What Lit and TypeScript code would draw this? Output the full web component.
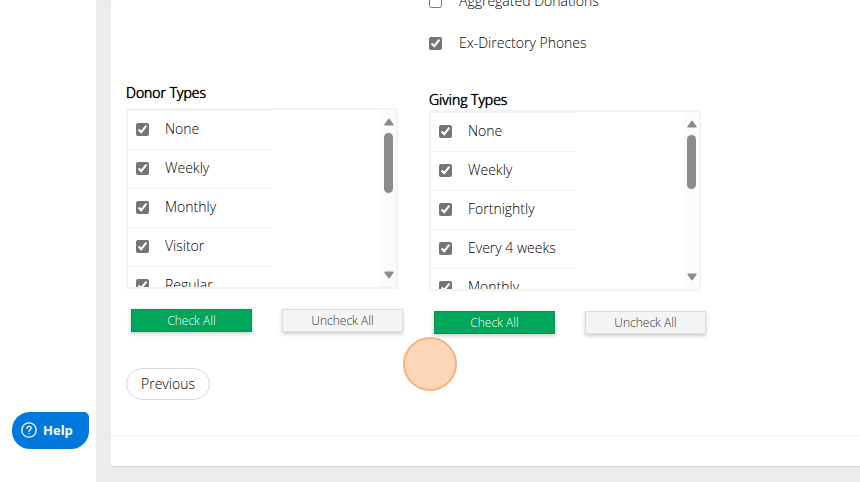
import { LitElement, html, css } from "lit";
import { customElement, property } from "lit/decorators.js";

@customElement("check-list")
class CheckList extends LitElement {
  @property() heading = "";
  @property({ attribute: false }) items: string[] = [];

  static styles = css`
    :host {
      display: block;
      width: 272px;
    }
    .heading {
      margin: 0;
      font-size: 14px;
      line-height: 20px;
      font-weight: 300;
      color: #000;
      text-shadow: 0 0 0 #000, 0 0 1px #000;
    }
    .box {
      display: flex;
      justify-content: space-between;
      height: 177px;
      margin-top: var(--list-gap, 5px);
      border: 2px solid #f3f3f3;
      overflow: hidden;
    }
    .rows {
      width: 145px;
      margin: 0;
      padding: 0;
      list-style: none;
    }
    .row {
      display: flex;
      align-items: center;
      gap: 16px;
      height: 36px;
      padding: 0 0 2px 8px;
      border-top: 1px solid #f3f3f3;
      font-size: 14px;
      line-height: 20px;
    }
    .tick {
      width: 13px;
      height: 13px;
      margin: 0;
      accent-color: #757575;
    }
    .track {
      display: flex;
      flex-direction: column;
      align-items: center;
      width: 15px;
      padding: 8px 0;
      box-sizing: border-box;
      background: #fbfbfb;
    }
    .arrow {
      width: 10px;
      height: 8px;
      fill: #8b8b8b;
    }
    .thumb {
      width: 9px;
      height: var(--thumb-size, 60px);
      margin: 7px 0 auto;
      border-radius: 5px;
      background: #8b8b8b;
    }
    .actions {
      display: flex;
      gap: 30px;
      margin: 20px 0 0 5px;
      width: 272px;
    }
    .btn {
      flex: 1;
      height: 23px;
      padding: 0;
      border: 1px solid #dcdcdc;
      background: #f4f4f4;
      color: #333;
      font: inherit;
      font-size: 12px;
      line-height: 20px;
      box-shadow: 0 2px 4px rgba(0, 0, 0, 0.2);
    }
    .primary {
      border-color: #089350;
      background: #00a65a;
      color: #fff;
    }
  `;

  render() {
    return html`
      <h2 class="heading">${this.heading}</h2>
      <div class="box">
        <ul class="rows">
          ${this.items.map(
            (item) => html`<li>
              <label class="row"><input class="tick" type="checkbox" checked />${item}</label>
            </li>`
          )}
        </ul>
        <div class="track" aria-hidden="true">
          <svg class="arrow" viewBox="0 0 10 8"><path d="M4.3 1Q5 .2 5.7 1L9.5 6.2Q10 7.5 8.8 7.6H1.2Q0 7.5 .5 6.2Z" /></svg>
          <div class="thumb"></div>
          <svg class="arrow" viewBox="0 0 10 8"><path d="M4.3 7Q5 7.8 5.7 7L9.5 1.8Q10 .5 8.8 .4H1.2Q0 .5 .5 1.8Z" /></svg>
        </div>
      </div>
      <div class="actions">
        <button class="btn primary" type="button">Check All</button>
        <button class="btn" type="button">Uncheck All</button>
      </div>
    `;
  }
}

@customElement("app-root")
class AppRoot extends LitElement {
  static styles = css`
    :host {
      display: flex;
      min-height: 100vh;
      overflow: hidden;
      background: #edebec;
      color: #000;
      font-family: "Open Sans", "Noto Sans", sans-serif;
      font-weight: 300;
      font-size: 14px;
      line-height: 20px;
    }
    .sidebar {
      display: flex;
      flex: none;
      flex-direction: column;
      justify-content: flex-end;
      width: 96px;
      box-sizing: border-box;
      padding: 0 7px 33px 12px;
      background: #fff;
    }
    .help {
      display: flex;
      align-items: center;
      gap: 6px;
      height: 37px;
      padding: 0 9px 1px;
      border: 0;
      border-radius: 18px 5px 18px 18px;
      background: #0079de;
      color: #fff;
      font: inherit;
      font-size: 13px;
      font-weight: 700;
    }
    .help-icon {
      width: 16px;
      height: 16px;
      fill: none;
      stroke: #fff;
      stroke-width: 1.3;
      stroke-linecap: round;
    }
    .main {
      flex: 1;
      min-width: 0;
      padding: 0 0 15px 15px;
    }
    .card {
      border-bottom: 1px solid #d2d0d1;
      border-radius: 3px 0 0 3px;
      background: #fff;
    }
    .content {
      position: relative;
      padding: 0 15px 35px;
    }
    .columns {
      display: flex;
      gap: 31px;
    }
    .left {
      padding-top: 83px;
    }
    /* The option list continues above the top edge of the window. */
    .right {
      margin-top: -20px;
      --list-gap: 0px;
      --thumb-size: 54px;
    }
    .options {
      padding-bottom: 26px;
    }
    .option {
      display: flex;
      align-items: center;
      gap: 17px;
      height: 42px;
    }
    .tick {
      width: 13px;
      height: 13px;
      margin: 0;
      accent-color: #757575;
    }
    .previous {
      height: 32px;
      margin-top: 36px;
      padding: 0 14px;
      border: 1px solid #d8d8d8;
      border-radius: 16px;
      background: #fff;
      color: #000;
      font: inherit;
    }
    .pointer {
      position: absolute;
      left: 292px;
      top: 337px;
      width: 50px;
      height: 50px;
      border: 2px solid #f6b27c;
      border-radius: 50%;
      background: #fdd6b8;
    }
    .footer {
      height: 30px;
      border-top: 1px solid #f3f3f3;
    }
  `;

  render() {
    return html`
      <aside class="sidebar">
        <button class="help" type="button">
          <svg class="help-icon" viewBox="0 0 16 16" aria-hidden="true">
            <circle cx="8" cy="8" r="7.2" />
            <path d="M6 6.3C6 3.7 10.1 3.8 10.1 6.2C10.1 7.7 8 7.7 8 9.3M8 11.6V11.7" />
          </svg>
          Help
        </button>
      </aside>
      <main class="main">
        <div class="card">
          <div class="content">
            <div class="columns">
              <div class="left">
                <check-list
                  heading="Donor Types"
                  .items=${["None", "Weekly", "Monthly", "Visitor", "Regular"]}
                ></check-list>
                <button class="previous" type="button">Previous</button>
              </div>
              <div class="right">
                <div class="options">
                  <label class="option"><input class="tick" type="checkbox" />Aggregated Donations</label>
                  <label class="option"><input class="tick" type="checkbox" checked />Ex-Directory Phones</label>
                </div>
                <check-list
                  heading="Giving Types"
                  .items=${["None", "Weekly", "Fortnightly", "Every 4 weeks", "Monthly"]}
                ></check-list>
              </div>
            </div>
            <div class="pointer"></div>
          </div>
          <div class="footer"></div>
        </div>
      </main>
    `;
  }
}
